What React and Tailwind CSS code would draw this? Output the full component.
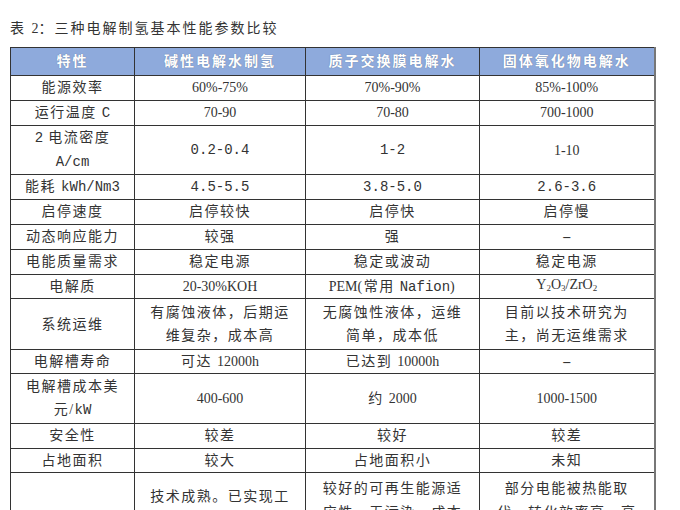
import React from "react";

const M = ({ children }) => (
  <span className="font-['Liberation_Mono','Noto_Sans_CJK_SC',monospace] tracking-normal">
    {children}
  </span>
);

const N = ({ children }) => (
  <span className="tracking-normal">{children}</span>
);

const Dash = () => <b className="tracking-normal">–</b>;

const rows = [
  { h: "h-[25px]", cells: ["能源效率", <N>60%-75%</N>, <N>70%-90%</N>, <N>85%-100%</N>] },
  { h: "h-[25px]", cells: [<>运行温度 <M>C</M></>, <N>70-90</N>, <N>70-80</N>, <N>700-1000</N>] },
  {
    h: "h-[48px]",
    two: true,
    cells: [
      <>
        <M>2</M> 电流密度
        <br />
        <M>A/cm</M>
      </>,
      <M>0.2-0.4</M>,
      <M>1-2</M>,
      <N>1-10</N>,
    ],
  },
  { h: "h-[25px]", cells: [<>能耗 <M>kWh/Nm3</M></>, <M>4.5-5.5</M>, <M>3.8-5.0</M>, <M>2.6-3.6</M>] },
  { h: "h-[25px]", cells: ["启停速度", "启停较快", "启停快", "启停慢"] },
  { h: "h-[25px]", cells: ["动态响应能力", "较强", "强", <Dash />] },
  { h: "h-[25px]", cells: ["电能质量需求", "稳定电源", "稳定或波动", "稳定电源"] },
  {
    h: "h-[24px]",
    cells: [
      "电解质",
      <N>20-30%KOH</N>,
      <>
        <N>PEM</N>(常用 <M>Nafion</M>)
      </>,
      <N>
        Y<span className="text-[9px] align-[-2px]">2</span>O
        <span className="text-[9px] align-[-2px]">3</span>/ZrO
        <span className="text-[9px] align-[-2px]">2</span>
      </N>,
    ],
  },
  {
    h: "h-[51px]",
    two: true,
    cells: [
      "系统运维",
      <>
        有腐蚀液体，后期运
        <br />
        维复杂，成本高
      </>,
      <>
        无腐蚀性液体，运维
        <br />
        简单，成本低
      </>,
      <>
        目前以技术研究为
        <br />
        主，尚无运维需求
      </>,
    ],
  },
  { h: "h-[24px]", cells: ["电解槽寿命", <>可达 <N>12000h</N></>, <>已达到 <N>10000h</N></>, <Dash />] },
  {
    h: "h-[50px]",
    two: true,
    cells: [
      <>
        电解槽成本美
        <br />
        元/<M>kW</M>
      </>,
      <N>400-600</N>,
      <>约 <N>2000</N></>,
      <N>1000-1500</N>,
    ],
  },
  { h: "h-[25px]", cells: ["安全性", "较差", "较好", "较差"] },
  { h: "h-[24px]", cells: ["占地面积", "较大", "占地面积小", "未知"] },
];

const headers = ["特性", "碱性电解水制氢", "质子交换膜电解水", "固体氧化物电解水"];

const App = () => {
  const cell = "border border-[#333] text-center align-middle p-0";
  const lastCol = "border-r-2 border-r-[#777]";

  return (
    <div className="w-[680px] h-[510px] overflow-hidden bg-white text-[#333] font-['Liberation_Serif','Noto_Sans_CJK_SC',serif] text-[14px] tracking-[1.5px]">
      <div className="pt-[19px] pl-[10px] leading-[20px] text-[14px] tracking-[2px]">
        表 <N>2</N>：三种电解制氢基本性能参数比较
      </div>
      <table className="mt-[8px] ml-[10px] w-[644px] table-fixed border-collapse">
        <colgroup>
          <col className="w-[124px]" />
          <col className="w-[171px]" />
          <col className="w-[174px]" />
          <col className="w-[175px]" />
        </colgroup>
        <thead>
          <tr className="h-[28px] bg-[#8eaadc]">
            {headers.map((t, i) => (
              <th
                key={t}
                className={`${cell} ${i === 3 ? lastCol : ""} leading-[22px] font-bold text-white tracking-[2px] [text-shadow:0_0_1px_rgba(60,70,90,0.6)]`}
              >
                {t}
              </th>
            ))}
          </tr>
        </thead>
        <tbody>
          {rows.map((r, ri) => (
            <tr key={ri} className={r.h}>
              {r.cells.map((c, ci) => (
                <td
                  key={ci}
                  className={`${cell} ${ci === 3 ? lastCol : ""} ${r.two ? "leading-[23px]" : "leading-[20px]"}`}
                >
                  {c}
                </td>
              ))}
            </tr>
          ))}
          <tr className="h-[120px]">
            <td className={`${cell} leading-[24px] align-top pt-[80px]`}>优点</td>
            <td className={`${cell} leading-[24px] align-top pt-[12px]`}>
              技术成熟。已实现工
              <br />
              业化大规模应用
            </td>
            <td className={`${cell} leading-[24px] align-top pt-[4px]`}>
              较好的可再生能源适
              <br />
              应性，无污染，成本
              <br />
              较高
            </td>
            <td className={`${cell} ${lastCol} leading-[24px] align-top pt-[4px]`}>
              部分电能被热能取
              <br />
              代，转化效率高，高
              <br />
              温限制材料选择
            </td>
          </tr>
        </tbody>
      </table>
    </div>
  );
};

export default App;
